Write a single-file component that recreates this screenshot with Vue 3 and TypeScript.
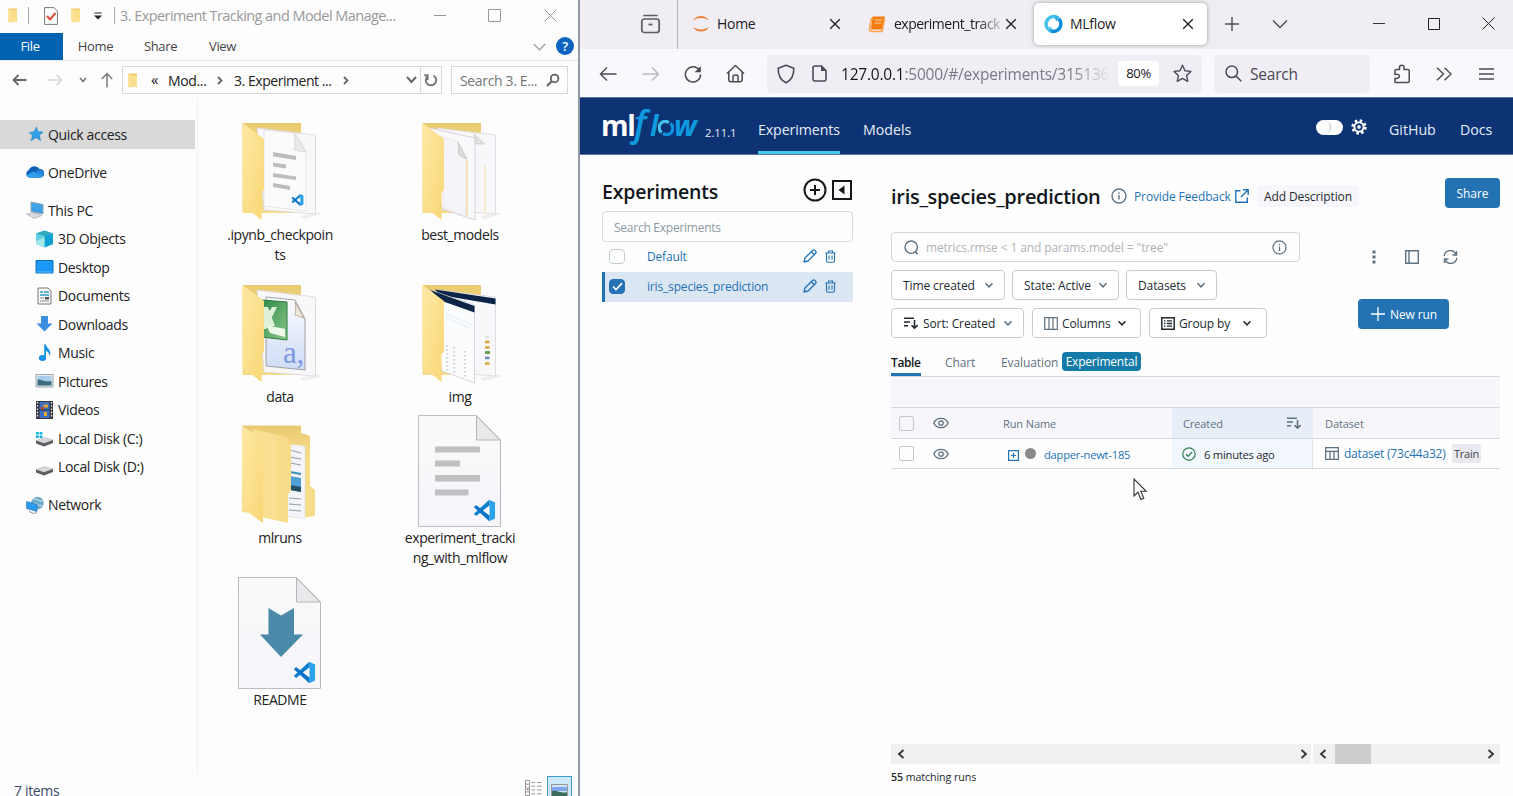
<script setup lang="ts">
interface NavItem {
  label: string
  icon: string
  child?: boolean
  gap?: boolean
  active?: boolean
}

const navItems: NavItem[] = [
  { label: 'Quick access', icon: 'star', active: true },
  { label: 'OneDrive', icon: 'cloud', gap: true },
  { label: 'This PC', icon: 'pc', gap: true },
  { label: '3D Objects', icon: 'cube', child: true },
  { label: 'Desktop', icon: 'desktop', child: true },
  { label: 'Documents', icon: 'doc', child: true },
  { label: 'Downloads', icon: 'down', child: true },
  { label: 'Music', icon: 'music', child: true },
  { label: 'Pictures', icon: 'picture', child: true },
  { label: 'Videos', icon: 'video', child: true },
  { label: 'Local Disk (C:)', icon: 'diskc', child: true },
  { label: 'Local Disk (D:)', icon: 'disk', child: true },
  { label: 'Network', icon: 'network', gap: true },
]

interface FileItem {
  lines: string[]
  icon: string
}

const files: FileItem[] = [
  { lines: ['.ipynb_checkpoin', 'ts'], icon: 'f-notebook' },
  { lines: ['best_models'], icon: 'f-models' },
  { lines: ['data'], icon: 'f-data' },
  { lines: ['img'], icon: 'f-img' },
  { lines: ['mlruns'], icon: 'f-runs' },
  { lines: ['experiment_tracki', 'ng_with_mlflow'], icon: 'f-ipynb' },
  { lines: ['README'], icon: 'f-readme' },
]

const experiments = [
  { name: 'Default', checked: false },
  { name: 'iris_species_prediction', checked: true },
]
</script>

<template>
  <div class="screen">
    <!-- shared symbols -->
    <svg class="defs" width="0" height="0">
      <defs>
        <linearGradient id="gFolder" x1="0" y1="0" x2="1" y2="1">
          <stop offset="0" stop-color="#fde8a4" /><stop offset="1" stop-color="#f9d775" />
        </linearGradient>
        <linearGradient id="gBack" x1="0" y1="0" x2="0" y2="1">
          <stop offset="0" stop-color="#e9c96f" /><stop offset="0.3" stop-color="#f7dc88" />
        </linearGradient>
        <linearGradient id="gPaper" x1="0" y1="0" x2="0" y2="1">
          <stop offset="0" stop-color="#fafafb" /><stop offset="1" stop-color="#f5f5fa" />
        </linearGradient>
        <linearGradient id="gXl" x1="0" y1="0" x2="1" y2="1">
          <stop offset="0" stop-color="#2d8b46" /><stop offset="1" stop-color="#8cc78a" />
        </linearGradient>
        <linearGradient id="gCsv" x1="0" y1="0" x2="0" y2="1">
          <stop offset="0" stop-color="#fbfcfe" /><stop offset="1" stop-color="#cfdcf6" />
        </linearGradient>
      </defs>
      <symbol id="vscode" viewBox="0 0 24 24">
        <path d="M17 0.8 23 3.6V20.4L17 23.2Z" fill="#2aa3ea" />
        <path d="M17 0.8 1 15.4 3.2 17.8 17 7Z" fill="#0b7fd0" />
        <path d="M17 23.2 1 8.6 3.2 6.2 17 17Z" fill="#0a74c8" />
        <path d="M17 7 10.5 12 17 17Z" fill="#fafafc" />
      </symbol>
      <symbol id="chev" viewBox="0 0 10 10">
        <path d="M1.5 3.2 5 6.8 8.5 3.2" fill="none" stroke="currentColor" stroke-width="1.5" />
      </symbol>
      <symbol id="close" viewBox="0 0 12 12">
        <path d="M1.2 1.2 10.8 10.8M10.8 1.2 1.2 10.8" fill="none" stroke="currentColor" stroke-width="1.3" />
      </symbol>
      <symbol id="folder-s" viewBox="0 0 12 16">
        <path d="M1 1H10V13L11 14H4Z" fill="#f3d06f" /><path d="M1 1 4.5 3V16L1 14Z" fill="#fbe39a" />
        <path d="M4.5 3H10V14H4.5Z" fill="#fbdf8d" />
      </symbol>
      <symbol id="info" viewBox="0 0 16 16">
        <circle cx="8" cy="8" r="7" fill="none" stroke="currentColor" stroke-width="1.3" />
        <path d="M8 7V11.6M8 4.3V5.7" stroke="currentColor" stroke-width="1.4" />
      </symbol>
      <symbol id="eye" viewBox="0 0 16 12">
        <path d="M.8 6C3.5-.2 12.5-.2 15.2 6 12.5 12.2 3.5 12.2.8 6Z" fill="none" stroke="currentColor" stroke-width="1.3" />
        <circle cx="8" cy="6" r="2.2" fill="none" stroke="currentColor" stroke-width="1.3" />
      </symbol>
      <symbol id="sort" viewBox="0 0 16 14">
        <path d="M1 2.2H11M1 6H7M1 9.8H5M11.5 4V12M8.5 9.2 11.5 12.2 14.7 9.2" fill="none" stroke="currentColor" stroke-width="1.6" />
      </symbol>
      <symbol id="mlring" viewBox="0 0 20 20">
        <path d="M4.600 15.400A7.600 7.600 0 0 1 12.800 2.900" fill="none" stroke="#44c3ec" stroke-width="3.800" />
        <path d="M15.400 4.600A7.600 7.600 0 0 1 7.200 17.100" fill="none" stroke="#0b8fdd" stroke-width="3.800" />
        <path d="M11.500 0 16.500 2.800 12.500 7.500ZM8.500 20 3.500 17.200 7.500 12.500Z" fill="#2aace6" />
      </symbol>
    </svg>

    <!-- file explorer -->
    <section class="explorer">
      <header class="x-title">
        <svg class="xt-f1" width="12" height="17"><use href="#folder-s" /></svg>
        <i class="xt-bar b1"></i>
        <svg class="xt-check" width="14" height="18" viewBox="0 0 14 18">
          <path d="M.6.6H10L13.4 4V17.4H.6Z" fill="#fff" stroke="#777" />
          <path d="M3 9 6 12.5 11.5 6" fill="none" stroke="#dc4a32" stroke-width="2" />
        </svg>
        <svg class="xt-f2" width="12" height="17"><use href="#folder-s" /></svg>
        <svg class="xt-drop" width="8" height="8" viewBox="0 0 8 8"><path d="M.5 1H7.5" stroke="#222" /><path d="M0 3.4H8L4 7.4Z" fill="#222" /></svg>
        <i class="xt-bar b2"></i>
        <span class="xt-text">3. Experiment Tracking and Model Manage...</span>
        <svg class="xt-min" width="12" height="12" viewBox="0 0 12 12"><path d="M0 5.5H12" stroke="#999" /></svg>
        <svg class="xt-max" width="13" height="13" viewBox="0 0 13 13"><path d="M.5.5H12.500V12.500H.5Z" fill="none" stroke="#999" /></svg>
        <svg class="xt-close" width="13" height="13" viewBox="0 0 13 13"><path d="M.5.5 12.500 12.500M12.500.5.5 12.500" stroke="#999" /></svg>
      </header>
      <nav class="x-ribbon">
        <span class="rb file">File</span>
        <span class="rb r-home">Home</span>
        <span class="rb r-share">Share</span>
        <span class="rb r-view">View</span>
        <svg class="r-chev" width="13" height="8" viewBox="0 0 13 8"><path d="M.8 1 6.500 6.800 12.200 1" fill="none" stroke="#999" stroke-width="1.2" /></svg>
        <span class="r-help">?</span>
      </nav>
      <div class="x-address">
        <svg class="a-back" width="15" height="12" viewBox="0 0 15 12"><path d="M14.500 6H1.500M6.500 1 1.500 6 6.500 11" fill="none" stroke="#666" stroke-width="1.800" /></svg>
        <svg class="a-fwd" width="15" height="12" viewBox="0 0 15 12"><path d="M.5 6H13.500M8.500 1 13.500 6 8.500 11" fill="none" stroke="#d4d4d4" stroke-width="1.500" /></svg>
        <svg class="a-drop" width="8" height="6" viewBox="0 0 8 6"><path d="M1 1 4 4.500 7 1" fill="none" stroke="#777" stroke-width="1.600" /></svg>
        <svg class="a-up" width="12" height="16" viewBox="0 0 12 16"><path d="M6 15.500V1.500M.8 7 6 1.500 11.200 7" fill="none" stroke="#777" stroke-width="1.500" /></svg>
        <div class="a-box">
          <svg class="ab-f" width="12" height="17"><use href="#folder-s" /></svg>
          <span class="ab-q">«</span>
          <span class="ab-1">Mod...</span>
          <svg class="ab-c1" width="6" height="9" viewBox="0 0 6 9"><path d="M1 1 4.500 4.500 1 8" fill="none" stroke="#666" stroke-width="1.800" /></svg>
          <span class="ab-2">3. Experiment ...</span>
          <svg class="ab-c2" width="6" height="9" viewBox="0 0 6 9"><path d="M1 1 4.500 4.500 1 8" fill="none" stroke="#666" stroke-width="1.800" /></svg>
          <svg class="ab-d" width="11" height="8" viewBox="0 0 11 8"><path d="M1 1 5.500 6 10 1" fill="none" stroke="#666" stroke-width="2" /></svg>
          <span class="ab-r">
            <svg width="14" height="15" viewBox="0 0 14 15"><path d="M9.500 2.600A5.200 5.200 0 1 1 3.200 3.600M3.600 7V2.300H.2" fill="none" stroke="#777" stroke-width="2" /></svg>
          </span>
        </div>
        <div class="a-search">
          <span>Search 3. E...</span>
          <svg width="14" height="14" viewBox="0 0 14 14"><circle cx="8.600" cy="5.400" r="3.800" fill="none" stroke="#666" stroke-width="1.900" /><path d="M5.800 8.200 1 13" stroke="#666" stroke-width="2.200" /></svg>
        </div>
      </div>

      <div class="x-body">
        <aside class="tree">
          <div
            v-for="n in navItems"
            :key="n.label"
            class="node"
            :class="{ child: n.child, gap: n.gap, active: n.active }"
          >
            <svg class="n-ic" width="19" height="18" viewBox="0 0 19 18">
              <g v-if="n.icon === 'star'">
                <path d="M11.500 2 13 6.800 18 7 14.300 10.300 15.500 15.500 11 12.500 6 15.800 7.500 10.500 4 7.400 9 6.900Z" fill="#2f9fe8" stroke="#1b7fc4" stroke-width=".6" />
                <path d="M2.500 8H6M4.500 13H7" stroke="#b9c7d2" stroke-width=".8" />
              </g>
              <g v-else-if="n.icon === 'cloud'">
                <path d="M4.500 14.500A4 4 0 0 1 4 6.800 6 6 0 0 1 14.500 6 4.200 4.200 0 0 1 15.500 14.500Z" fill="#0f62b8" />
                <path d="M5 14.500 12.500 7.500C16 6.800 19 8.500 19 11 19 13.500 17 14.500 15.500 14.500Z" fill="#2488dc" />
                <path d="M1 12.500 8.500 8.500 18 13.300C16 14.800 5 14.700 3.500 14.400Z" fill="#2e9fea" />
              </g>
              <g v-else-if="n.icon === 'pc'">
                <path d="M6 1 18 3.500V13L6 10.500Z" fill="#3fa2e6" stroke="#8fa3b3" />
                <path d="M1.500 13 8 11.500 17 14.500 9 17.500Z" fill="#d7dade" stroke="#9aa3ac" stroke-width=".6" />
              </g>
              <g v-else-if="n.icon === 'cube'">
                <path d="M9.500 .5 18 3.500V14L9.500 17.500 1 14V3.500Z" fill="#62cfe4" />
                <path d="M9.500 .5 18 3.500 9.500 6 1 3.500Z" fill="#35a9bd" />
                <path d="M9.500 6 18 3.500V14L9.500 17.500Z" fill="#109fd3" />
                <path d="M1 11 9.500 7V17.500L1 14Z" fill="#a3e8ec" />
              </g>
              <g v-else-if="n.icon === 'desktop'">
                <path d="M1 2.500H18V15H1Z" fill="#1b98f5" stroke="#1273bd" />
                <path d="M1.500 14H17.500" stroke="#5ebcf7" />
              </g>
              <g v-else-if="n.icon === 'doc'">
                <path d="M3 1H13L16 4V17H3Z" fill="#fbfbfb" stroke="#777" />
                <path d="M5 5H8M9 5H14M5 8H14" stroke="#2e9bc6" stroke-width="1.400" />
                <path d="M5 11H9M5 14H14" stroke="#888" />
                <path d="M10 10H14V12.500H10Z" fill="#555" />
              </g>
              <g v-else-if="n.icon === 'down'">
                <path d="M6 1H13V8.500H17.500L9.500 16.500 1.500 8.500H6Z" fill="#3a8ee2" />
              </g>
              <g v-else-if="n.icon === 'music'">
                <ellipse cx="7.500" cy="14" rx="3.600" ry="3" fill="#1893e8" />
                <path d="M9.200 14V.5H11C11.500 4.500 17.500 6 14.500 12.500 14.500 8.800 12.500 7.500 11 7V14Z" fill="#1893e8" />
              </g>
              <g v-else-if="n.icon === 'picture'">
                <path d="M1 2.500H18V15H1Z" fill="#e9eef2" stroke="#9aa5ad" />
                <path d="M2.500 4H16.500V13.500H2.500Z" fill="#a9cdea" />
                <path d="M2.500 7.500C7 7 9 10.500 16.500 9V13.500H2.500Z" fill="#3c6d80" />
              </g>
              <g v-else-if="n.icon === 'video'">
                <path d="M1 0H18V18H1Z" fill="#35373c" />
                <path d="M4.500 1H14.500V8.500H4.500ZM4.500 9.500H14.500V17H4.500Z" fill="#3d6fc4" />
                <path d="M2.500 1V17M16.500 1V17" stroke="#eee" stroke-width="1.300" stroke-dasharray="1.600 1.600" />
                <path d="M8.500 3.500H13V6.500H8.500ZM9 11H12V15H9Z" fill="#e2a92c" />
                <path d="M6 6H9V8.500H6Z" fill="#c43d2f" />
              </g>
              <g v-else-if="n.icon === 'diskc' || n.icon === 'disk'">
                <path d="M1 11.500 9.500 8.500 18 11V14L9 17.500 1 14.500Z" fill="#5b5e62" />
                <path d="M1 11.500 9.500 8.500 18 11 9 14.300Z" fill="#d4d6d8" />
                <path v-if="n.icon === 'diskc'" d="M1 3H3.800V5.600H1ZM4.600 3H7.400V5.600H4.600ZM1 6.400H3.800V9H1ZM4.600 6.400H7.400V9H4.600Z" fill="#0fb4dd" />
              </g>
              <g v-else>
                <circle cx="12.500" cy="7" r="6.200" fill="#6fa9cc" />
                <path d="M8 4C11 1 13 6 18 5M7 9C12 5 14 12 17 9" fill="none" stroke="#d4e8f3" />
                <path d="M1.500 5.500 12 8.500V15.500L1.500 12.500Z" fill="#2e9bec" stroke="#2177bb" stroke-width=".7" />
                <path d="M4 15.500 9 17.500 12 16.500" stroke="#8a9aa6" fill="none" />
              </g>
            </svg>
            <span>{{ n.label }}</span>
          </div>
        </aside>

        <main class="files">
          <figure v-for="f in files" :key="f.icon" class="file-item">
            <svg class="f-ic" width="100" height="112" viewBox="0 0 100 112">
              <!-- opened folder with pages -->
              <g v-if="f.icon === 'f-notebook' || f.icon === 'f-models' || f.icon === 'f-data' || f.icon === 'f-img'">
                <path d="M70 103 88 99 92 101 74 106Z" fill="#efefef" />
                <path d="M12.500 10H71V100H12.500Z" fill="url(#gBack)" />
                <path d="M27 15 85.500 22V101L34 97Z" fill="#f8f8fb" stroke="#d8d8dc" stroke-width=".8" />
                <g v-if="f.icon === 'f-notebook'">
                  <path d="M34 17 66 20 76 39V98L34 93Z" fill="#fbfbfd" stroke="#ddd" stroke-width=".7" />
                  <path d="M64 20C65 26 66 32 64 37L76 39Z" fill="#eceae8" stroke="#c9c9c9" stroke-width=".6" />
                  <path d="M43 39 66 43V47L43 43.500ZM43 49.500 56 51.500V55.500L43 53.500ZM43 60 66 63.500V67L43 64ZM43 70 60 73V77L43 74Z" fill="#bdbdbd" />
                  <use href="#vscode" x="61" y="79" width="13" height="16" />
                </g>
                <g v-if="f.icon === 'f-models'">
                  <path d="M64 21 66 31 75 31Z" fill="#e2e0de" stroke="#c4c4c4" stroke-width=".6" />
                  <path d="M75 52V100" stroke="#f4dca3" />
                  <path d="M20 15 65 25V107L32 96Z" fill="#f9f9fc" stroke="#c9c9cf" stroke-width=".8" />
                  <path d="M30 23 48 29 56 46V103L34 95Z" fill="#f5f5f9" stroke="#e6e2da" stroke-width=".6" />
                  <path d="M57 47V103" stroke="#f1d596" stroke-width="1.200" />
                  <path d="M48 29 49 42 57 46Z" fill="#dcdad8" stroke="#bbb" stroke-width=".6" />
                </g>
                <g v-if="f.icon === 'f-data'">
                  <path d="M36 22 65 25 75 44V95L36 91Z" fill="url(#gCsv)" stroke="#8b8b8f" stroke-width=".8" />
                  <path d="M65 27C66 32 66 36 65 40L74 43Z" fill="#efe8dc" stroke="#a08c6c" stroke-width=".6" />
                  <path d="M32 25 57 27V65L32 62Z" fill="url(#gXl)" stroke="#2b7a3e" />
                  <path d="M32 32 38 32 45 51H37L32 41ZM42 32H47L36 54H32V49Z" fill="#dff2d8" />
                  <path d="M36 50 55 54V62L40 58Z" fill="#eef8ea" />
                  <text x="53" y="88" font-family="Liberation Serif, serif" font-size="31" fill="#7c98e2">a,</text>
                </g>
                <g v-if="f.icon === 'f-img'">
                  <path d="M25 14.500 85.500 23.500V29.500L30 20Z" fill="#0c2447" />
                  <path d="M75 62H79" stroke="#ccc" />
                  <path d="M75 67H79.500M75 72.500H79.500M75 88.500H79.500" stroke="#d9a53a" stroke-width="2.600" />
                  <path d="M75 77.500H80" stroke="#5b9b4c" stroke-width="2.800" /><path d="M75 83H79.500" stroke="#6a86b5" stroke-width="2.400" />
                  <path d="M20 15 64.500 30V108L32 96Z" fill="#fbfcfe" stroke="#c9c9cf" stroke-width=".7" />
                  <path d="M20 15 64.500 31V37.500L32 26Z" fill="#0c2447" />
                  <path d="M36 38 62 50M36 42 60 53" stroke="#e8f5f6" stroke-width="1.500" />
                  <path d="M37 70V98M44 72V100M55 76V104" stroke="#d6d6d6" stroke-width="2.400" stroke-dasharray="1.500 2.500" />
                </g>
                <path d="M12.500 10 34 26V77Q31.500 78 31.500 81V107L12.500 92Z" fill="url(#gFolder)" />
              </g>
              <g v-else-if="f.icon === 'f-runs'">
                <path d="M12.500 9.500H71V17L78 19 80 21V70L85 74V100L70 102 12 96Z" fill="url(#gBack)" />
                <path d="M58 28 75 30V103L56 100Z" fill="#f4f5f8" stroke="#ddd" stroke-width=".6" />
                <path d="M60 34 71 37M60 41 71 43M60 47 71 49M59 82 71 83M59 88 71 89M59 94 71 95" stroke="#8b9097" stroke-width=".9" />
                <path d="M60 56 71 58" stroke="#3b8fb5" stroke-width="2" />
                <path d="M60 60 71 62V76L60 74Z" fill="#4f9ed6" /><path d="M60 69 71 71V76L60 74Z" fill="#254f63" />
                <path d="M23 13 56 21 61 28V74L58 79V107L23 99Z" fill="#f9dc8a" />
                <path d="M23 13 46 18.500V103L23 98Z" fill="#fadf92" />
                <path d="M12.500 10 23 17 33 26V107L12.500 92Z" fill="url(#gFolder)" />
              </g>
              <g v-else>
                <path d="M8.500 -.5H66.500L90.500 24V110.500H8.500Z" fill="url(#gPaper)" stroke="#bcbcc0" />
                <path d="M66.500 0V24H90Z" fill="#e9e9ec" stroke="#b5b5b9" />
                <path v-if="f.icon === 'f-ipynb'" d="M25 30.500H70V36.500H25ZM25 44.500H50V50.500H25ZM25 59H70V65.500H25ZM25 73.500H58.500V79.500H25Z" fill="#bfc0c2" />
                <path v-else d="M38.500 30 51 37.500 64 30V56.500H73L51 79 30 56.500H38.500Z" fill="#4a8aa8" />
                <use href="#vscode" x="63" y="83" width="23" height="23" />
              </g>
            </svg>
            <figcaption><span v-for="l in f.lines" :key="l">{{ l }}</span></figcaption>
          </figure>
        </main>
      </div>

      <footer class="x-status">
        <span>7 items</span>
        <svg class="s-list" width="17" height="16" viewBox="0 0 17 16">
          <path d="M.5 .5H4.500V15.500H.5ZM.5 4.200H4.500M.5 8H4.500M.5 11.800H4.500M6.500 2.500H10M12 2.500H16.500M6.500 6.200H10M12 6.200H16.500M6.500 10H10M12 10H16.500M6.500 13.800H10M12 13.800H16.500" fill="none" stroke="#999" />
          <path d="M2 9.500H3.500" stroke="#b33" />
        </svg>
        <span class="s-thumb">
          <svg width="17" height="14" viewBox="0 0 17 14"><path d="M.5.5H16.500V13.500H.5Z" fill="#cfe3fb" stroke="#999" /><path d="M1 3H16V7H1Z" fill="#7fa6ea" /><path d="M1 7C6 6 8 9 16 8.500V13H1Z" fill="#3c6d5c" /></svg>
        </span>
      </footer>
    </section>

    <!-- browser -->
    <section class="browser">
      <header class="tabs">
        <svg class="t-arch" width="21" height="20" viewBox="0 0 21 20">
          <path d="M4 1.500H17" stroke="#5b5b66" stroke-width="1.700" stroke-linecap="round" />
          <rect x="1.800" y="5" width="17.400" height="13.500" rx="2.500" fill="none" stroke="#5b5b66" stroke-width="1.700" />
          <path d="M8.500 10.500H12.500" stroke="#5b5b66" stroke-width="1.700" />
        </svg>
        <i class="t-sep"></i>
        <div class="tab t1">
          <svg width="18" height="20" viewBox="0 0 18 20"><path d="M1 6.500C4 .5 14 .5 17 6.500 13 3.200 5 3.200 1 6.500ZM1 13C4 19 14 19 17 13 13 16.300 5 16.300 1 13Z" fill="#ee7f3b" /></svg>
          <span class="tt">Home</span>
          <svg class="t-x" width="12" height="12"><use href="#close" /></svg>
        </div>
        <div class="tab t2">
          <svg width="18" height="18" viewBox="0 0 18 18">
            <path d="M4.500 1.500H17L14 14.500H3Z" fill="#f57c10" />
            <path d="M3.500 3 1.500 14.500C1.500 16 2.500 16.500 4 16.500H14L16.500 4" fill="none" stroke="#f9a24a" stroke-width="1.600" />
            <path d="M7 5H14M6.500 8H13" stroke="#ffd7a8" />
          </svg>
          <span class="tt fade">experiment_track</span>
          <svg class="t-x" width="12" height="12"><use href="#close" /></svg>
        </div>
        <div class="tab t3">
          <svg width="19" height="20"><use href="#mlring" /></svg>
          <span class="tt">MLflow</span>
          <svg class="t-x" width="12" height="12"><use href="#close" /></svg>
        </div>
        <svg class="t-plus" width="16" height="16" viewBox="0 0 16 16"><path d="M8 1V15M1 8H15" stroke="#4a4a55" stroke-width="1.400" /></svg>
        <svg class="t-chev" width="16" height="10" viewBox="0 0 16 10"><path d="M1 1.500 8 8.500 15 1.500" fill="none" stroke="#4a4a55" stroke-width="1.300" /></svg>
        <svg class="t-min" width="14" height="12" viewBox="0 0 14 12"><path d="M1 5.500H13" stroke="#333" /></svg>
        <svg class="t-max" width="12" height="12" viewBox="0 0 12 12"><path d="M.5.5H11.500V11.500H.5Z" fill="none" stroke="#222" /></svg>
        <svg class="t-cls" width="13" height="13" viewBox="0 0 13 13"><path d="M.5.5 12.500 12.500M12.500.5.5 12.500" stroke="#222" /></svg>
      </header>

      <div class="toolbar">
        <svg class="b-back" width="18" height="16" viewBox="0 0 18 16"><path d="M17.500 8H1.500M8 1.500 1.500 8 8 14.500" fill="none" stroke="#4a4a55" stroke-width="1.400" /></svg>
        <svg class="b-fwd" width="18" height="16" viewBox="0 0 18 16"><path d="M.5 8H16.500M10 1.500 16.500 8 10 14.500" fill="none" stroke="#b9b8c2" stroke-width="1.400" /></svg>
        <svg class="b-rel" width="18" height="18" viewBox="0 0 18 18"><path d="M15.500 5.500A7.600 7.600 0 1 0 16.600 9.500" fill="none" stroke="#4a4a55" stroke-width="1.500" /><path d="M16.800 1V7.200H10.600Z" fill="#4a4a55" /></svg>
        <svg class="b-home" width="19" height="19" viewBox="0 0 19 19"><path d="M1 9.500 9.500 1.500 18 9.500M2.800 8.200V15.500Q2.800 17.800 5 17.800H14Q16.200 17.800 16.200 15.500V8.200M7 17.500V12.500Q7 11 9.500 11T12 12.500V17.500" fill="none" stroke="#4a4a55" stroke-width="1.500" stroke-linejoin="round" /></svg>
        <div class="urlbar">
          <svg width="18" height="20" viewBox="0 0 18 20"><path d="M9 1.200 16.800 4.200C17 11 14.500 16 9 18.800 3.500 16 1 11 1.200 4.200Z" fill="none" stroke="#4a4a55" stroke-width="1.600" stroke-linejoin="round" /></svg>
          <svg class="u-page" width="15" height="17" viewBox="0 0 15 17"><path d="M3 1H9.500L14 5.500V14Q14 16 12 16H3Q1 16 1 14V3Q1 1 3 1Z" fill="none" stroke="#4a4a55" stroke-width="1.600" /><path d="M9 1V6H14Z" fill="#4a4a55" /></svg>
          <span class="url"><b>127.0.0.1</b>:5000/#/experiments/315136</span>
          <span class="zoom">80%</span>
          <svg class="u-star" width="19" height="19" viewBox="0 0 19 19"><path d="M9.500 1.300 12 6.700 17.900 7.400 13.600 11.400 14.700 17.300 9.500 14.400 4.300 17.300 5.400 11.400 1.100 7.400 7 6.700Z" fill="none" stroke="#4a4a55" stroke-width="1.400" stroke-linejoin="round" /></svg>
        </div>
        <div class="searchbar">
          <svg width="17" height="17" viewBox="0 0 17 17"><circle cx="6.800" cy="6.800" r="5.800" fill="none" stroke="#4a4a55" stroke-width="1.500" /><path d="M11 11 16.300 16.300" stroke="#4a4a55" stroke-width="1.600" /></svg>
          <span>Search</span>
        </div>
        <svg class="b-ext" width="18" height="20" viewBox="0 0 18 20"><path d="M2 18.500V14.200C8 15.500 8 9 2 10.500V6.500Q2 5.500 3.500 5.500H6.500V3.500Q6.500 1.200 8.800 1.200T11 3.500V5.500H14.500Q16.200 5.500 16.200 7V17Q16.200 18.500 14.500 18.500Z" fill="none" stroke="#4a4a55" stroke-width="1.500" stroke-linejoin="round" /></svg>
        <svg class="b-more" width="16" height="14" viewBox="0 0 16 14"><path d="M1 .8 7.500 7 1 13.200M8.500 .8 15 7 8.500 13.200" fill="none" stroke="#4a4a55" stroke-width="1.400" /></svg>
        <svg class="b-menu" width="15" height="12" viewBox="0 0 15 12"><path d="M0 1H15M0 6H15M0 11H15" stroke="#4a4a55" stroke-width="1.400" /></svg>
      </div>

      <div class="mlhead">
        <span class="logo">
          <b>ml</b><i class="lf">f</i><i class="ll">l</i><svg width="16" height="16" viewBox="0 0 20 20"><path d="M4.500 15.500A7.600 7.600 0 0 1 13.600 3.300" fill="none" stroke="#44c3ec" stroke-width="4" /><path d="M15.500 4.500A7.600 7.600 0 0 1 6.400 16.700" fill="none" stroke="#0f95df" stroke-width="4" /></svg><i class="lw">w</i>
        </span>
        <span class="ver">2.11.1</span>
        <a class="ml-nav on">Experiments</a>
        <a class="ml-nav md">Models</a>
        <span class="toggle"><i></i></span>
        <svg class="gear" width="16" height="16" viewBox="0 0 16 16"><circle cx="8" cy="8" r="6.400" fill="none" stroke="#fff" stroke-width="2.600" stroke-dasharray="2.510 2.510" /><circle cx="8" cy="8" r="4.600" fill="none" stroke="#fff" stroke-width="1.900" /><circle cx="8" cy="8" r="1.900" fill="#e3ebf5" /></svg>
        <a class="gh">GitHub</a>
        <a class="dc">Docs</a>
      </div>

      <div class="page">
        <aside class="side">
          <div class="side-head">
            <h2>Experiments</h2>
            <svg width="24" height="24" viewBox="0 0 24 24"><circle cx="12" cy="12" r="10.500" fill="none" stroke="#15191e" stroke-width="2" /><path d="M12 7V17M7 12H17" stroke="#15191e" stroke-width="2" /></svg>
            <svg class="sq" width="20" height="20" viewBox="0 0 20 20"><path d="M1 1H19V19H1Z" fill="none" stroke="#15191e" stroke-width="2" /><path d="M12.500 5.500V14.500L6.500 10Z" fill="#15191e" /></svg>
          </div>
          <div class="side-search">Search Experiments</div>
          <div v-for="e in experiments" :key="e.name" class="exp" :class="{ sel: e.checked }">
            <span class="cb" :class="{ checked: e.checked }">
              <svg v-if="e.checked" width="11" height="9" viewBox="0 0 11 9"><path d="M1 4.500 4 7.500 10 1.200" fill="none" stroke="#fff" stroke-width="1.700" /></svg>
            </span>
            <span class="ename">{{ e.name }}</span>
            <svg width="14" height="14" viewBox="0 0 14 14"><path d="M1 13 2 9 9.700 1.300Q11 .4 12.300 1.700T12.700 4.300L5 12ZM8.300 2.800 11.300 5.800" fill="none" stroke="#2272b4" stroke-width="1.300" stroke-linejoin="round" /></svg>
            <svg class="bin" width="11" height="13" viewBox="0 0 11 13"><path d="M.3 3H10.700M3.500 3V1H7.500V3M1.500 3.200V10.500Q1.500 12.200 3 12.200H8Q9.500 12.200 9.500 10.500V3.200M4 5.500V9.800M7 5.500V9.800" fill="none" stroke="#2272b4" stroke-width="1.100" /></svg>
          </div>
        </aside>

        <main class="content">
          <div class="titlebar">
            <h1>iris_species_prediction</h1>
            <svg class="ti" width="16" height="16"><use href="#info" /></svg>
            <a class="fb">Provide Feedback</a>
            <svg class="ext" width="14" height="14" viewBox="0 0 14 14"><path d="M5.500 1.700H.8V13.200H12.300V8.500M8 .8H13.200V6M13 1 6 8" fill="none" stroke="#2272b4" stroke-width="1.400" /></svg>
            <span class="adddesc">Add Description</span>
            <button class="share">Share</button>
          </div>

          <div class="controls">
            <div class="left">
              <div class="query">
                <svg width="15" height="15" viewBox="0 0 15 15"><circle cx="7.200" cy="7.200" r="6.200" fill="none" stroke="#5f7281" stroke-width="1.400" /><path d="M11 11.500 13.500 14.300" stroke="#5f7281" stroke-width="1.700" /></svg>
                <span>metrics.rmse &lt; 1 and params.model = "tree"</span>
                <svg class="qi" width="15" height="15"><use href="#info" /></svg>
              </div>
              <div class="btns tight">
                <button class="w1"><span>Time created</span><svg width="10" height="10"><use href="#chev" /></svg></button>
                <button class="w2"><span>State: Active</span><svg width="10" height="10"><use href="#chev" /></svg></button>
                <button class="w3"><span>Datasets</span><svg width="10" height="10"><use href="#chev" /></svg></button>
              </div>
              <div class="btns">
                <button class="w4"><svg class="dark" width="16" height="14"><use href="#sort" /></svg><span>Sort: Created</span><svg width="10" height="10"><use href="#chev" /></svg></button>
                <button class="w5"><svg width="14" height="13" viewBox="0 0 14 13"><path d="M.7.7H13.300V12.300H.7ZM5 1V12M9 1V12" fill="none" stroke="#5f7281" stroke-width="1.200" /></svg><span>Columns</span><svg class="dark" width="10" height="10"><use href="#chev" /></svg></button>
                <button class="w6"><svg width="14" height="13" viewBox="0 0 14 13"><path d="M.8.8H13.200V12.200H.8Z" fill="none" stroke="#222a31" stroke-width="1.500" /><path d="M3 3.800H4.500M3 6.500H4.500M3 9.200H4.500M6 3.800H11M6 6.500H11M6 9.200H11" stroke="#222a31" stroke-width="1.300" /></svg><span>Group by</span><svg class="dark" width="10" height="10"><use href="#chev" /></svg></button>
              </div>
            </div>
            <div class="right">
              <div class="ric">
                <svg class="dots" width="4" height="14" viewBox="0 0 4 14"><path d="M.5 .5H3.500V3.500H.5ZM.5 5.500H3.500V8.500H.5ZM.5 10.500H3.500V13.500H.5Z" fill="#5f7281" /></svg>
                <svg class="pan" width="14" height="14" viewBox="0 0 14 14"><path d="M.7.7H13.300V13.300H.7ZM4 1V13" fill="none" stroke="#5f7281" stroke-width="1.400" /></svg>
                <svg class="ref" width="15" height="14" viewBox="0 0 15 14"><path d="M1.200 6A6 6 0 0 1 12.800 4.500M13.800 8A6 6 0 0 1 2.200 9.500M13.500 1V5H9.500M1.500 13V9H5.500" fill="none" stroke="#5f7281" stroke-width="1.400" /></svg>
              </div>
              <button class="newrun"><svg width="14" height="14" viewBox="0 0 14 14"><path d="M7 0V14M0 7H14" stroke="#fff" stroke-width="1.300" /></svg><span>New run</span></button>
            </div>
          </div>

          <div class="vtabs">
            <span class="vt on">Table</span>
            <span class="vt vc">Chart</span>
            <span class="vt ve">Evaluation</span>
            <span class="pill">Experimental</span>
          </div>

          <div class="table">
            <div class="band"></div>
            <div class="tr th">
              <span class="c0"><i class="box"></i><svg width="16" height="12"><use href="#eye" /></svg><span class="rn">Run Name</span></span>
              <span class="c1"><span>Created</span><svg class="so" width="16" height="14"><use href="#sort" /></svg></span>
              <span class="c2">Dataset</span>
            </div>
            <div class="tr td">
              <span class="c0"><i class="box"></i><svg width="16" height="12"><use href="#eye" /></svg>
                <svg class="exd" width="11" height="11" viewBox="0 0 11 11"><path d="M.6.600H10.400V10.400H.6ZM5.500 3V8M3 5.500H8" fill="none" stroke="#2272b4" stroke-width="1.200" /></svg>
                <i class="dot"></i><a>dapper-newt-185</a></span>
              <span class="c1">
                <svg width="14" height="14" viewBox="0 0 14 14"><circle cx="7" cy="7" r="6.200" fill="none" stroke="#2f7d4f" stroke-width="1.200" /><path d="M4 7.200 6.200 9.300 10 5" fill="none" stroke="#2f7d4f" stroke-width="1.200" /></svg>
                <span class="ago">6 minutes ago</span></span>
              <span class="c2">
                <svg width="14" height="13" viewBox="0 0 14 13"><path d="M.7.7H13.300V12.300H.7ZM1 4.300H13M5 4.500V12M9 4.500V12" fill="none" stroke="#5f7281" stroke-width="1.300" /></svg>
                <a>dataset (73c44a32)</a><em>Train</em></span>
            </div>
          </div>

          <div class="scrolls">
            <div class="sb s1">
              <svg width="9" height="10" viewBox="0 0 9 10"><path d="M6.500 1 2 5 6.500 9" fill="none" stroke="#333" stroke-width="1.800" /></svg>
              <svg class="end" width="9" height="10" viewBox="0 0 9 10"><path d="M2.500 1 7 5 2.500 9" fill="none" stroke="#333" stroke-width="1.800" /></svg>
            </div>
            <div class="sb s2">
              <svg width="9" height="10" viewBox="0 0 9 10"><path d="M6.500 1 2 5 6.500 9" fill="none" stroke="#333" stroke-width="1.800" /></svg>
              <i class="thumb"></i>
              <svg class="end" width="9" height="10" viewBox="0 0 9 10"><path d="M2.500 1 7 5 2.500 9" fill="none" stroke="#333" stroke-width="1.800" /></svg>
            </div>
          </div>
          <div class="match"><b>55</b> matching runs</div>
        </main>
      </div>
      <svg class="cursor" width="15" height="23" viewBox="0 0 15 23"><path d="M1 1V18L5 14.300 8 21.500 10.800 20.300 7.800 13.300H13.200Z" fill="#fff" stroke="#333" stroke-width="1.100" /></svg>
    </section>
  </div>
</template>

<style>
html,
body {
  margin: 0;
  overflow: hidden;
}
</style>

<style scoped>
.screen {
  width: 1513px;
  height: 796px;
  display: flex;
  overflow: hidden;
  background: #fdfdfd;
  font-family: 'Open Sans', 'Noto Sans', sans-serif;
  color: #222;
  position: relative;
}
.screen * { box-sizing: border-box; }
.screen span, .screen a, h1, h2, .match, .side-search, button { white-space: nowrap; }
.screen span { flex: none; }
svg { flex: none; display: block; }
.defs { position: absolute; }
i { font-style: normal; flex: none; }

/* ---------- explorer ---------- */
.explorer {
  width: 580px;
  flex: none;
  display: flex;
  flex-direction: column;
  border-right: 2px solid #8f9aa5;
  font-size: 14px;
  letter-spacing: -0.35px;
}
.x-title { height: 33px; display: flex; align-items: center; padding-bottom: 2px; }
.xt-f1 { margin-left: 7px; }
.xt-bar { width: 1px; height: 17px; background: #aaa; }
.b1 { margin-left: 9px; }
.xt-check { margin-left: 15px; }
.xt-f2 { margin-left: 12px; }
.xt-drop { margin-left: 12px; }
.b2 { margin-left: 12px; }
.xt-text { margin-left: 5px; width: 314px; color: #999; font-size: 14.5px; letter-spacing: -0.57px; }
.xt-max { margin-left: 42px; }
.xt-close { margin-left: 43px; }
.x-ribbon { height: 28px; display: flex; align-items: stretch; border-bottom: 1px solid #e6e6e6; line-height: 27px; font-size: 13px; color: #444; }
.file { width: 63px; height: 27px; background: #0063b1; color: #fff; text-align: center; padding-right: 3px; }
.r-home { width: 65px; text-align: center; }
.r-share { width: 65px; text-align: center; }
.r-view { width: 59px; text-align: center; }
.r-chev { margin: 10px 0 0 281px; }
.r-help { width: 18px; height: 18px; margin: 4px 0 0 10px; border-radius: 50%; background: #0c63c0; color: #fff; text-align: center; line-height: 18px; font-weight: 600; }
.x-address { height: 37px; display: flex; align-items: center; padding-top: 1px; }
.a-back { margin-left: 12px; }
.a-fwd { margin-left: 21px; }
.a-drop { margin-left: 16px; }
.a-up { margin-left: 14px; }
.a-box { flex: none; margin-left: 9px; width: 320px; height: 28px; border: 1px solid #d9d9d9; display: flex; align-items: center; color: #222; }
.ab-f { margin-left: 4px; }
.ab-q { margin-left: 12px; width: 17px; margin-top: -3px; font-size: 15px; }
.ab-1 { width: 49px; }
.ab-2 { margin-left: 11px; width: 109px; letter-spacing: -0.45px; }
.ab-d { margin-left: 57px; }
.ab-r { margin-left: 3px; height: 26px; width: 21px; border-left: 1px solid #d9d9d9; display: flex; align-items: center; justify-content: center; }
.a-search { flex: none; margin-left: 9px; width: 117px; height: 28px; border: 1px solid #d9d9d9; display: flex; align-items: center; padding-left: 8px; color: #757575; }
.a-search span { width: 86px; }
.x-body { flex: 1; display: flex; min-height: 0; }
.tree { width: 198px; flex: none; border-right: 1px solid #f3f3f3; padding-top: 22px; }
.node { width: 195px; height: 28.5px; display: flex; align-items: center; padding-left: 25px; color: #222; }
.node.child { padding-left: 35px; }
.node.gap { margin-top: 9.500px; }
.node.active { background: #d9d9d9; }
.node span { margin-left: 4px; }
.files { margin: 15px 0 0 -8px; display: grid; grid-template-columns: 180px 180px; grid-auto-rows: max-content; row-gap: 9.600px; align-items: start; }
.file-item { margin: 0; display: flex; flex-direction: column; align-items: center; }
.f-ic { overflow: visible; margin-left: -1px; }
figcaption { display: flex; flex-direction: column; align-items: center; line-height: 20px; color: #222; letter-spacing: -0.42px; }
.x-status { height: 22px; display: flex; padding-left: 14px; color: #3a4a66; line-height: 33px; }
.x-status > span:first-child { width: 511px; }
.s-list { margin-top: 6px; }
.s-thumb { margin: 2px 0 0 5px; width: 25px; height: 26px; border: 1px solid #3e9bc9; background: #cde8f8; padding: 7px 0 0 3px; }

/* ---------- browser ---------- */
.browser { flex: 1; min-width: 0; display: flex; flex-direction: column; }
.tabs { height: 49px; background: #f0edf3; display: flex; align-items: center; padding-bottom: 2px; font-size: 14px; letter-spacing: -0.3px; color: #1c1b22; }
.t-arch { margin-left: 60px; }
.t-sep { margin-left: 16px; width: 1px; height: 49px; background: #b6b5bd; margin-bottom: -2px; }
.tab { flex: none; display: flex; align-items: center; height: 42px; width: 176px; padding: 0 13px 0 14px; }
.tab .tt { flex: 1; overflow: hidden; margin-left: 7px; }
.tab .fade { margin-left: 8px; letter-spacing: -0.5px; -webkit-mask-image: linear-gradient(90deg, #000 75%, transparent 102%); mask-image: linear-gradient(90deg, #000 75%, transparent 102%); }
.t3 { margin-left: 4px; width: 173px; padding: 0 13px 0 10px; background: #fff; border-radius: 5px; box-shadow: 0 0 4px rgba(0, 0, 0, 0.35); }
.t-plus { margin-left: 17px; }
.t-chev { margin-left: 32px; }
.t-min { margin-left: 84px; }
.t-max { margin-left: 42px; }
.t-cls { margin-left: 42px; }
.toolbar { height: 48px; background: #f9f8fd; display: flex; align-items: center; padding-top: 1px; font-size: 15.500px; color: #4a4a55; }
.b-back { margin-left: 19px; }
.b-fwd { margin-left: 25px; }
.b-rel, .b-home { margin-left: 24px; }
.urlbar { flex: none; margin-left: 22px; width: 435px; height: 38px; background: #f0eef4; border-radius: 5px; display: flex; align-items: center; padding-left: 10px; }
.u-page { margin-left: 17px; }
.url { margin-left: 14px; width: 267px; overflow: hidden; color: #7a7983; letter-spacing: -0.22px; -webkit-mask-image: linear-gradient(90deg, #000 86%, transparent 101%); mask-image: linear-gradient(90deg, #000 86%, transparent 101%); }
.url b { font-weight: 400; color: #15141a; }
.zoom { margin-left: 10px; width: 41px; height: 25px; border-radius: 4px; background: #fff; color: #15141a; font-size: 13px; line-height: 25px; text-align: center; letter-spacing: -0.3px; }
.u-star { margin-left: 14px; }
.searchbar { flex: none; margin-left: 12px; width: 156px; height: 38px; background: #f0eef4; border-radius: 5px; display: flex; align-items: center; padding-left: 11px; }
.searchbar span { margin-left: 8px; letter-spacing: -0.2px; }
.b-ext { margin-left: 23px; }
.b-more { margin-left: 25px; }
.b-menu { margin-left: 27px; }

.mlhead { height: 58px; background: #0e3374; border-top: 1px solid #5f7399; border-bottom: 1px solid #5f7399; display: flex; align-items: center; color: #e3edf7; font-size: 14.2px; padding-top: 4px; }
.logo { margin: -11px 0 0 21px; width: 100px; display: flex; align-items: baseline; color: #fff; line-height: 40px; height: 40px; }
.logo b { font-size: 28px; font-weight: 700; letter-spacing: -1.2px; width: 33px; }
.logo i { font-style: italic; font-weight: 700; color: #109be0; font-size: 28px; }
.logo .lf { font-size: 36px; font-weight: 600; width: 16px; }
.logo .ll { width: 8px; }
.logo svg { margin: 0; align-self: baseline; }
.logo .lw { font-size: 29px; margin-left: 0; }
.ver { margin-left: 4px; width: 53px; font-size: 11.200px; padding-top: 9px; }
.ml-nav { height: 52px; line-height: 55px; flex: none; }
.ml-nav.on { width: 82px; border-bottom: 3px solid #43c9ed; letter-spacing: -0.1px; }
.ml-nav.md { margin-left: 23px; width: 50px; }
.toggle { margin: -2px 0 0 403px; width: 27px; height: 15px; border-radius: 8px; background: #fff; display: flex; }
.toggle i { width: 15px; height: 15px; border-radius: 50%; border-right: 1px solid #b9c4d6; }
.gear { margin: -2px 0 0 8px; }
.gh { margin: 2px 0 0 22px; width: 49px; flex: none; }
.dc { margin: 2px 0 0 22px; }

.page { flex: 1; min-height: 0; display: flex; padding-left: 22px; background: #fefefe; }
.side { width: 251px; flex: none; font-size: 12px; padding-top: 21px; }
.side-head { height: 28px; display: flex; align-items: center; }
.side-head h2 { margin: 2px 0 0; width: 201px; font-size: 19.500px; font-weight: 600; color: #11171c; letter-spacing: -0.2px; }
.sq { margin-left: 5px; }
.side-search { margin-top: 7px; height: 31px; border: 1px solid #d5dde4; border-radius: 4px; padding-left: 11px; line-height: 31px; color: #8d99a3; letter-spacing: -0.3px; }
.side-search { letter-spacing: -0.25px; }
.exp { height: 29px; display: flex; align-items: center; padding: 0 0 1px 7px; color: #2272b4; letter-spacing: -0.17px; }
.exp.sel { margin-top: 1px; height: 30px; background: #dbe6f3; border-left: 3px solid #2272b4; padding: 0 0 2px 4px; }
.cb { width: 16px; height: 15px; border: 1px solid #c3cdd5; border-radius: 4px; background: #fff; display: flex; align-items: center; justify-content: center; }
.cb.checked { background: #2272b4; border-color: #2272b4; }
.ename { margin-left: 22px; width: 156px; }
.bin { margin-left: 8px; }

.content { margin-left: 38px; width: 609px; flex: none; display: flex; flex-direction: column; font-size: 12px; letter-spacing: -0.1px; }
.titlebar { margin-top: 23px; height: 30px; display: flex; align-items: center; }
.titlebar h1 { flex: none; margin: 6px 0 0; width: 220px; font-size: 20px; font-weight: 600; color: #11171c; letter-spacing: -0.28px; }
.ti { margin: 5px 0 0; color: #5f7281; }
.fb { flex: none; margin: 7px 0 0 7px; width: 101px; color: #2272b4; letter-spacing: -0.12px; }
.ext { margin: 5px 0 0; }
.adddesc { margin: 6px 0 0 8px; width: 102px; height: 22px; line-height: 23px; padding-left: 7px; background: #f7f6fa; border-radius: 4px; color: #222a31; }
button { font: inherit; letter-spacing: inherit; margin: 0; }
.share { margin-left: auto; width: 55px; height: 30px; border: 0; padding: 0; border-radius: 4px; background: #2272b4; color: #fff; }
.controls { margin-top: 24px; display: flex; height: 106px; }
.left { width: 409px; display: flex; flex-direction: column; gap: 8px; }
.query { height: 30px; border: 1px solid #cdd6dd; border-radius: 4px; display: flex; align-items: center; padding-left: 12px; color: #b0b3b8; letter-spacing: -0.12px; }
.query span { margin-left: 7px; width: 346px; }
.query svg { color: #5f7281; }
.btns { display: flex; gap: 8px; height: 30px; }
.btns.tight { gap: 7px; }
.btns button { height: 30px; border: 1px solid #c3cdd5; border-radius: 4px; background: #fff; display: flex; align-items: center; padding: 0 10px 0 11px; color: #222a31; }
.btns button svg { color: #5f7281; }
.btns button svg.dark { color: #222a31; }
.btns button > svg:last-child { margin-left: auto; }
.btns button > svg:first-child { margin-right: 4px; }
.w1 { width: 114px; }
.w2 { width: 107px; }
.w3 { width: 91px; }
.w4 { width: 133px; }
.w5 { width: 109px; }
.w6 { width: 118px; }
.btns .w5 > svg:last-child { margin-right: 3px; }
.btns .w6 > svg:last-child { margin-right: 4px; }
.right { flex: 1; display: flex; flex-direction: column; }
.ric { height: 50px; display: flex; align-items: center; }
.dots { margin-left: 72px; }
.pan { margin-left: 29px; }
.ref { margin-left: 24px; }
.newrun { margin: 17px 0 0 58px; width: 91px; height: 30px; border: 0; border-radius: 4px; background: #2272b4; color: #fff; display: flex; align-items: center; padding: 0 0 0 13px; }
.newrun span { margin-left: 5px; }

.vtabs { margin-top: 8px; height: 31px; display: flex; align-items: stretch; border-bottom: 1px solid #d3d7de; color: #5f7281; font-size: 12px; line-height: 33px; font-weight: 600; }
.vt.on { width: 30px; color: #11171c; border-bottom: 3px solid #2272b4; letter-spacing: -0.4px; }
.vc { margin-left: 24px; width: 31px; font-weight: 500; }
.ve { margin-left: 25px; width: 61px; font-weight: 500; }
.pill { margin: 6px 0 0 0; width: 79px; height: 19px; line-height: 20px; background: #147aa8; color: #fff; border-radius: 4px; text-align: center; font-weight: 500; letter-spacing: -0.2px; }
.band { height: 31px; background: #f7f6fb; border-bottom: 1px solid #d3d7de; }
.tr { display: flex; align-items: stretch; border-bottom: 1px solid #d3d7de; font-size: 11.200px; letter-spacing: -0.24px; }
.th { height: 31px; background: #f7f6fb; color: #5f7281; font-size: 11px; letter-spacing: -0.1px; }
.td { height: 30px; }
.tr > span { display: flex; align-items: center; }
.c0 { width: 281px; padding-left: 8px; }
.c0 > svg { color: #5f7281; }
.box { width: 15px; height: 15px; border: 1px solid #bfc8d0; border-radius: 2px; margin-right: 19px; }
.rn { margin-left: 54px; }
.c0 > .exd { margin: 3px 0 0 59px; }
.dot { margin: 0 8px 0 6px; width: 11px; height: 11px; border-radius: 50%; background: #8a8a8a; }
.tr a { color: #2272b4; }
.c0 a, .ago { padding-top: 2px; }
.c1 { width: 141px; padding-left: 11px; }
.th .c1 { background: #e7eef8; }
.td .c1 { background: #f2f7fd; border-right: 1px solid #dde5ee; padding-left: 10px; }
.so { margin-left: auto; margin-right: 11px; }
.ago { margin-left: 8px; color: #222a31; }
.c2 { padding-left: 12px; }
.c2 a { margin-left: 5px; width: 103px; font-size: 12px; letter-spacing: -0.22px; }
.c2 em { margin-left: 5px; width: 29px; height: 19px; line-height: 20px; text-align: center; font-style: normal; font-size: 11px; background: #eae9ef; border-radius: 3px; color: #3a444c; }
.scrolls { margin-top: auto; display: flex; gap: 2px; }
.sb { height: 20px; background: #f0f0f1; display: flex; align-items: center; padding: 0 3px 0 6px; }
.s1 { width: 420px; }
.s2 { width: 187px; padding: 0 5px 0 6px; }
.thumb { margin-left: 7px; width: 36px; height: 20px; background: #cdcdce; }
.end { margin-left: auto; }
.match { margin: 4px 0 10px; height: 18px; line-height: 18px; font-size: 10.700px; color: #222a31; }
.match b { font-weight: 600; }
.cursor { position: absolute; left: 1133px; top: 478px; }
</style>
